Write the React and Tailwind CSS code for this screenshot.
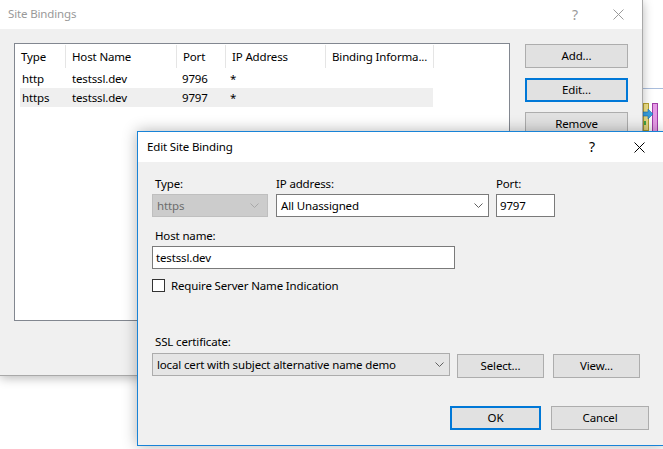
import clsx from "clsx";

const font = "font-['Noto_Sans',sans-serif] text-[11.5px] leading-[16px] tracking-[-0.15px]";

const Chevron = ({ className }) => (
  <svg width="9" height="5" viewBox="0 0 9 5" className={className}>
    <path d="M0.5 0.5 L4.5 4.5 L8.5 0.5" fill="none" stroke="currentColor" strokeWidth="1" />
  </svg>
);

const CloseGlyph = ({ className }) => (
  <svg width="11" height="11" viewBox="0 0 11 11" className={className}>
    <path d="M0.5 0.5 L10.5 10.5 M10.5 0.5 L0.5 10.5" stroke="currentColor" strokeWidth="1" />
  </svg>
);

const Button = ({ children, isDefault, className }) => (
  <div
    className={clsx(
      "flex items-center justify-center bg-[#e1e1e1] text-black",
      isDefault ? "border-2 border-[#0078d7]" : "border border-[#adadad]",
      className
    )}
  >
    {children}
  </div>
);

const columns = [
  { label: "Type", width: "w-[51px]" },
  { label: "Host Name", width: "w-[111px]" },
  { label: "Port", width: "w-[49px]" },
  { label: "IP Address", width: "w-[100px]" },
  { label: "Binding Informa...", width: "w-[108px]" },
];

const bindings = [
  { type: "http", host: "testssl.dev", port: "9796", ip: "*" },
  { type: "https", host: "testssl.dev", port: "9797", ip: "*", selected: true },
];

const SiteBindings = () => (
  <div className="absolute left-0 top-0 flex h-[376px] w-[643px] flex-col border-b border-r border-[#a9a9a9] bg-[#f0f0f0] shadow-[0_2px_10px_rgba(0,0,0,0.28)]">
    {/* title bar */}
    <div className="flex h-[29px] items-center bg-white text-[#999999]">
      <span className="pl-[8px] pb-[1px]">Site Bindings</span>
      <span className="ml-auto mr-[35px] text-[14px] leading-none text-[#9a9a9a]">?</span>
      <CloseGlyph className="mr-[18px] text-[#9a9a9a]" />
    </div>

    <div className="flex gap-[15px] pl-[14px] pt-[14px]">
      {/* list view */}
      <div className="h-[278px] w-[496px] border border-[#828790] bg-white">
        <div className="flex h-[25px] items-stretch">
          {columns.map((col) => (
            <div
              key={col.label}
              className={clsx(
                "my-[1px] flex items-center overflow-hidden whitespace-nowrap border-r border-[#e5e5e5] pl-[6px]",
                col.width
              )}
            >
              {col.label}
            </div>
          ))}
        </div>
        {bindings.map((b) => (
          <div
            key={b.type}
            className={clsx(
              "ml-[5px] grid h-[19px] w-[413px] grid-cols-[50px_110px_48px_1fr] items-center pl-[2px]",
              b.selected && "bg-[#efefef]"
            )}
          >
            <span>{b.type}</span>
            <span>{b.host}</span>
            <span>{b.port}</span>
            <span>{b.ip}</span>
          </div>
        ))}
      </div>

      {/* side buttons */}
      <div className="mt-[1px] flex flex-col gap-[10px]">
        <Button className="h-[24px] w-[103px]">Add...</Button>
        <Button isDefault className="h-[24px] w-[103px]">Edit...</Button>
        <Button className="h-[24px] w-[103px]">Remove</Button>
      </div>
    </div>
  </div>
);

const Label = ({ children, className }) => (
  <div className={clsx("h-[16px] leading-[16px]", className)}>{children}</div>
);

const EditSiteBinding = () => (
  <div className="absolute left-[137px] top-[131px] flex h-[315px] w-[528px] flex-col border border-[#1883d7] bg-[#f0f0f0] shadow-[0_0_14px_rgba(0,0,0,0.3)]">
    {/* title bar */}
    <div className="flex h-[30px] items-center bg-white">
      <span className="pl-[9px]">Edit Site Binding</span>
      <span className="ml-auto mr-[39px] text-[14px] leading-none">?</span>
      <CloseGlyph className="mr-[19px]" />
    </div>

    <div className="flex flex-col pl-[14px] pt-[14px]">
      {/* type / ip / port */}
      <div className="flex items-start">
        <div className="flex w-[124px] flex-col">
          <Label className="pl-[3px]">Type:</Label>
          <div className="mt-[2px] flex h-[23px] w-[116px] items-center border border-[#bfbfbf] bg-[#cccccc] pl-[4px] pr-[8px] text-[#6d6d6d]">
            <span>https</span>
            <Chevron className="ml-auto text-[#a8a8a8]" />
          </div>
        </div>
        <div className="flex w-[220px] flex-col">
          <Label>IP address:</Label>
          <div className="mt-[2px] flex h-[23px] w-[213px] items-center border border-[#7a7a7a] bg-white pl-[4px] pr-[5px]">
            <span>All Unassigned</span>
            <Chevron className="ml-auto text-[#606060]" />
          </div>
        </div>
        <div className="flex flex-col">
          <Label>Port:</Label>
          <div className="mt-[2px] flex h-[23px] w-[59px] items-center border border-[#7a7a7a] bg-white pl-[3px]">
            9797
          </div>
        </div>
      </div>

      {/* host name */}
      <Label className="mt-[11px] pl-[3px]">Host name:</Label>
      <div className="mt-[2px] flex h-[23px] w-[303px] items-center border border-[#7a7a7a] bg-white pl-[3px]">
        testssl.dev
      </div>

      {/* SNI */}
      <div className="mt-[10px] flex h-[13px] items-center">
        <div className="h-[13px] w-[13px] border border-[#333333] bg-white" />
        <span className="ml-[6px]">Require Server Name Indication</span>
      </div>

      {/* ssl certificate */}
      <Label className="mt-[42px] pl-[3px]">SSL certificate:</Label>
      <div className="mt-[3px] flex items-start">
        <div className="flex h-[23px] w-[298px] items-center border border-[#acacac] bg-[#e5e5e5] pl-[4px] pr-[5px]">
          <span>local cert with subject alternative name demo</span>
          <Chevron className="ml-auto text-[#606060]" />
        </div>
        <Button className="ml-[7px] mt-[1px] h-[24px] w-[87px]">Select...</Button>
        <Button className="ml-[9px] mt-[1px] h-[24px] w-[87px]">View...</Button>
      </div>

      {/* ok / cancel */}
      <div className="mt-[28px] flex gap-[10px] pl-[298px]">
        <Button isDefault className="h-[24px] w-[91px]">OK</Button>
        <Button className="h-[24px] w-[98px]">Cancel</Button>
      </div>
    </div>
  </div>
);

const DesktopScraps = () => (
  <div className="absolute left-[643px] top-0 h-[140px] w-[20px]">
    <div className="absolute left-0 top-[88px] h-px w-[20px] bg-[#a9bddc]" />
    <svg width="20" height="30" viewBox="0 0 20 30" className="absolute left-0 top-[103px]">
      <rect x="0.5" y="0.5" width="5" height="27" fill="#f3e48a" stroke="#b7a230" />
      <rect x="9.5" y="0.5" width="5" height="28" fill="#e59ae5" stroke="#a03ca8" />
      <rect x="1" y="18" width="2" height="4" fill="#49b14b" />
      <path d="M0 9 H5 V6 L10 11 L5 16 V13 H0 Z" fill="#3aa0e0" stroke="#1a6fb0" strokeWidth="0.6" />
    </svg>
  </div>
);

export default function App() {
  return (
    <div className={clsx("relative h-[449px] w-[663px] overflow-hidden bg-white text-black", font)}>
      <DesktopScraps />
      <SiteBindings />
      <EditSiteBinding />
    </div>
  );
}
